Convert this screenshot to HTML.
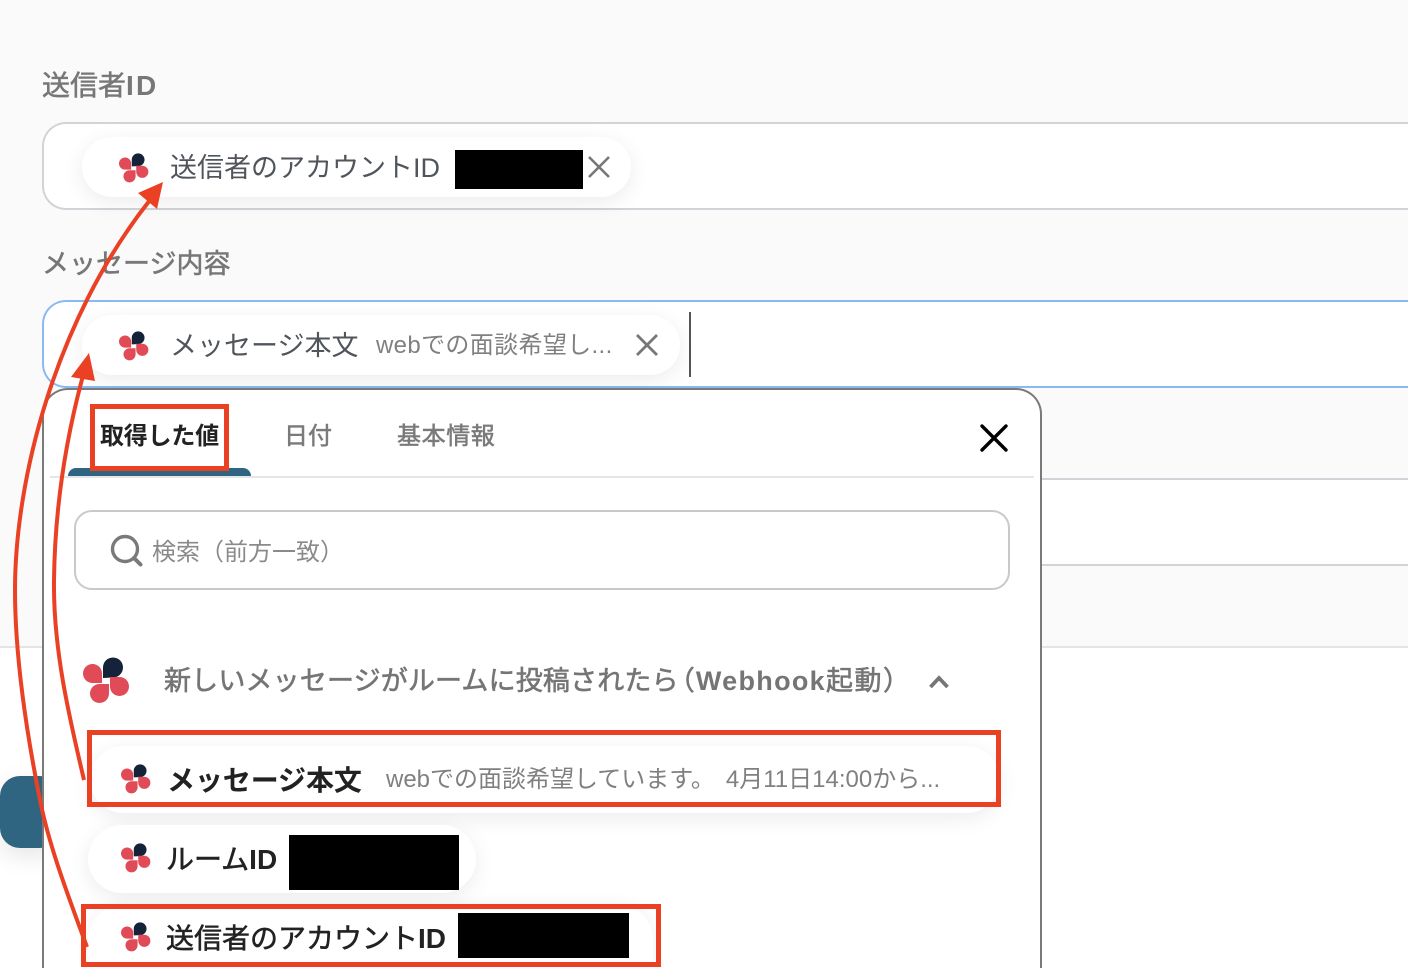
<!DOCTYPE html>
<html lang="ja">
<head>
<meta charset="utf-8">
<style>
html,body{margin:0;padding:0;width:1408px;height:968px;overflow:hidden}
body{position:relative;background:#fff;font-family:"Liberation Sans","Noto Sans CJK JP",sans-serif}
#w{position:absolute;left:0;top:0;width:1408px;height:968px;overflow:hidden}
.a{position:absolute}
.t{position:absolute;white-space:nowrap;line-height:1}
.m{-webkit-text-stroke:.55px currentColor}
.l{font-weight:700;-webkit-text-stroke:0}
.field{position:absolute;left:42px;width:1364px;height:84px;background:#fff;border:2px solid #d0d4d8;border-right:0;border-radius:24px 0 0 24px;box-sizing:content-box}
.chip{position:absolute;background:#fff;border-radius:34px;box-shadow:0 5px 22px rgba(0,0,0,.08)}
.blk{position:absolute;background:#000}
.red{position:absolute;border:5px solid #ea4125;box-sizing:border-box}
.ic{position:absolute;width:30px;height:30px}
</style>
</head>
<body>
<div id="w">
<svg width="0" height="0" style="position:absolute"><defs>
<symbol id="logo" viewBox="0 0 47 47">
<path fill="#14233a" d="M20 21V10.5A10 10 0 1 1 30 20.5Z"/>
<path fill="#e04b57" d="M19 26H9.5A9.5 9.5 0 1 1 19 16.5Z"/>
<path fill="#e04b57" d="M26 27V36.5A9.5 9.5 0 1 1 16.5 27Z"/>
<path fill="#e04b57" d="M27 20H36.5A9.5 9.5 0 1 1 27 29.5Z"/>
</symbol>
</defs></svg>

<div class="a" style="left:0;top:0;width:1408px;height:647px;background:#fafafa"></div>
<div class="a" style="left:0;top:646px;width:1408px;height:2px;background:#e2e4e6"></div>

<div class="t m" style="left:42px;top:72px;font-size:28px;color:#777">送信者<span class="l" style="letter-spacing:2.2px">ID</span></div>
<div class="field" style="top:122px"></div>
<div class="chip" style="left:82px;top:137px;width:549px;height:60px"></div>
<svg class="ic" style="left:119px;top:153px"><use href="#logo"/></svg>
<div class="t" style="left:170px;top:155px;font-size:27px;color:#50555b">送信者のアカウントID</div>
<div class="blk" style="left:455px;top:150px;width:128px;height:39px"></div>
<svg class="a" style="left:587px;top:155px" width="24" height="24"><path d="M2 2L22 22M22 2L2 22" stroke="#777" stroke-width="2.6" fill="none"/></svg>

<div class="t m" style="left:42px;top:251px;font-size:27px;color:#777">メッセージ内容</div>
<div class="field" style="top:300px;border-color:#8ab9f5"></div>
<div class="chip" style="left:82px;top:315px;width:598px;height:60px"></div>
<svg class="ic" style="left:119px;top:331px"><use href="#logo"/></svg>
<div class="t" style="left:170px;top:333px;font-size:27px;color:#50555b">メッセージ本文</div>
<div class="t" style="left:376px;top:334px;font-size:24px;color:#808080;letter-spacing:.35px">webでの面談希望し...</div>
<svg class="a" style="left:635px;top:333px" width="24" height="24"><path d="M2 2L22 22M22 2L2 22" stroke="#777" stroke-width="2.8" fill="none"/></svg>
<div class="a" style="left:689px;top:312px;width:2px;height:65px;background:#555"></div>

<div class="field" style="top:478px"></div>

<div class="a" style="left:0;top:776px;width:60px;height:72px;background:#2f6580;border-radius:20px;box-shadow:0 8px 24px rgba(0,0,0,.1)"></div>

<!-- popup -->
<div class="a" style="left:42px;top:388px;width:996px;height:578px;background:#fff;border:2px solid #7a7a7a;border-bottom:0;border-radius:26px 26px 0 0"></div>
<div class="t" style="left:100px;top:425px;font-size:24px;font-weight:700;color:#222;letter-spacing:-.2px">取得した値</div>
<div class="t m" style="left:284px;top:425px;font-size:24px;color:#7a7a7a">日付</div>
<div class="t m" style="left:397px;top:425px;font-size:24px;color:#7a7a7a;letter-spacing:.6px">基本情報</div>
<div class="a" style="left:50px;top:476px;width:984px;height:2px;background:#e6e6e6"></div>
<div class="a" style="left:68px;top:468px;width:183px;height:8px;background:#2f6580;border-radius:8px 8px 0 0"></div>
<svg class="a" style="left:979px;top:423px" width="30" height="30"><path d="M3 3L27 27M27 3L3 27" stroke="#000" stroke-width="3.4" stroke-linecap="round" fill="none"/></svg>

<div class="a" style="left:74px;top:510px;width:932px;height:76px;border:2px solid #c9c9c9;border-radius:18px;background:#fff"></div>
<svg class="a" style="left:110px;top:534px" width="33" height="33"><circle cx="15" cy="15" r="12.5" stroke="#7a7a7a" stroke-width="3.4" fill="none"/><path d="M24 24L30.5 30.5" stroke="#7a7a7a" stroke-width="4" stroke-linecap="round"/></svg>
<div class="t" style="left:152px;top:541px;font-size:24px;color:#8a8a8a">検索（前方一致）</div>

<svg class="a" style="left:83px;top:657px" width="47" height="47"><use href="#logo"/></svg>
<div class="t m" style="left:164px;top:668px;font-size:27px;color:#757575;letter-spacing:.16px;-webkit-text-stroke-width:.6px">新しいメッセージがルームに投稿されたら<span style="margin:0 1px 0 -11px">（</span><span class="l" style="letter-spacing:1.3px">Webhook</span><span style="letter-spacing:1.5px">起動</span><span style="margin-right:-14px">）</span></div>
<svg class="a" style="left:927px;top:673px" width="24" height="18"><path d="M3.5 14L12 5L20.5 14" stroke="#757575" stroke-width="3.8" fill="none"/></svg>

<div class="chip" style="left:90px;top:746px;width:910px;height:67px"></div>
<svg class="ic" style="left:121px;top:764px"><use href="#logo"/></svg>
<div class="t" style="left:167px;top:767px;font-size:28px;font-weight:700;color:#222;letter-spacing:-.1px">メッセージ本文</div>
<div class="t" style="left:386px;top:768px;font-size:24px;color:#808080;word-spacing:4.3px">webでの面談希望しています。 4月11日14:00から...</div>

<div class="chip" style="left:88px;top:825px;width:388px;height:68px"></div>
<svg class="ic" style="left:121px;top:843px"><use href="#logo"/></svg>
<div class="t m" style="left:166px;top:846px;font-size:28px;color:#222">ルーム<span class="l">ID</span></div>
<div class="blk" style="left:289px;top:835px;width:170px;height:55px"></div>

<div class="a" style="left:88px;top:905px;width:565px;height:63px;background:#fff;border-radius:34px 34px 0 0;box-shadow:0 -2px 14px rgba(0,0,0,.05)"></div>
<svg class="ic" style="left:121px;top:922px"><use href="#logo"/></svg>
<div class="t m" style="left:166px;top:925px;font-size:28px;color:#222">送信者のアカウント<span class="l">ID</span></div>
<div class="blk" style="left:458px;top:913px;width:171px;height:45px"></div>

<!-- annotations -->
<div class="red" style="left:90px;top:404px;width:139px;height:67px"></div>
<div class="red" style="left:87px;top:730px;width:914px;height:77px"></div>
<div class="red" style="left:81px;top:904px;width:580px;height:63px"></div>
<svg class="a" style="left:0;top:0" width="1408" height="968">
<path d="M84 780C70 720 53 650 54 580C55 500 68 430 84 372" stroke="#ea4125" stroke-width="4" fill="none"/>
<path d="M89 353L71 377L95 381Z" fill="#ea4125"/>
<path d="M87 947C62 880 48 840 40 800C28 740 15 660 15 590C15 480 55 320 150 200" stroke="#ea4125" stroke-width="4" fill="none"/>
<path d="M163 182L138 193L157 209Z" fill="#ea4125"/>
</svg>
</div>
</body>
</html>
